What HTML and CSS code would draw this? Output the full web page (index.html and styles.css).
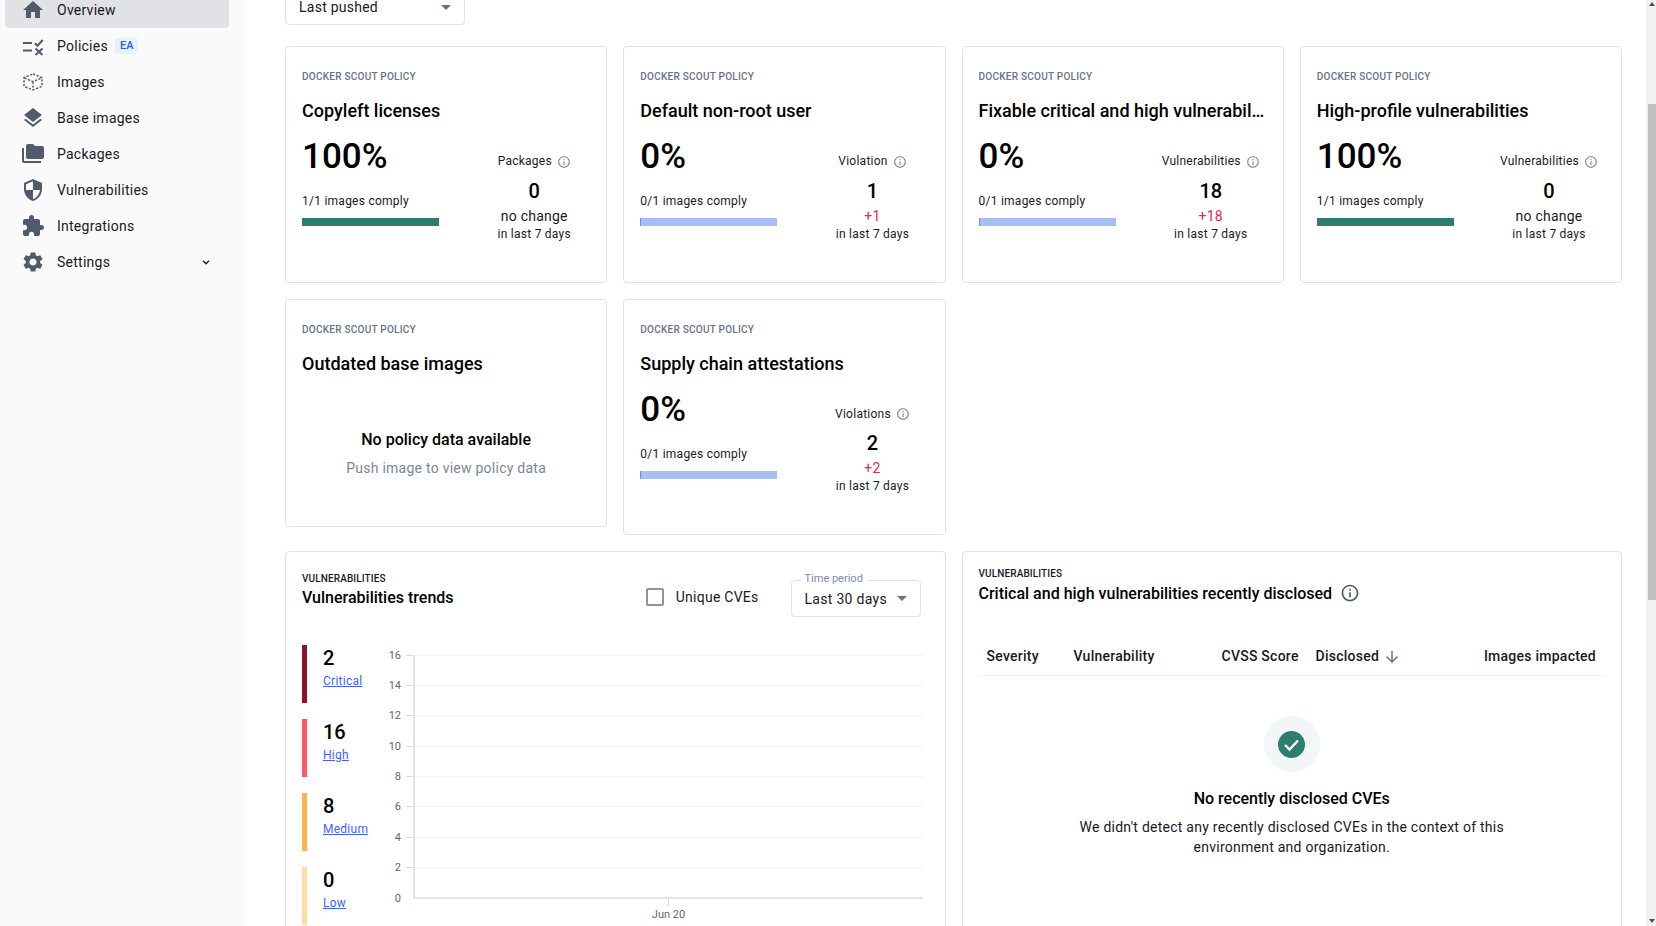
FILE: index.html
```html
<!DOCTYPE html>
<html lang="en">
<head>
    <meta charset="UTF-8">
    <meta name="viewport" content="width=device-width, initial-scale=1.0">
    <title>Docker Scout Overview</title>
    <link rel="stylesheet" href="styles.css">
</head>
<body>
    <svg class="sprites" width="0" height="0">
        <symbol id="info" viewBox="0 0 24 24"><path d="M11 7h2v2h-2zm0 4h2v6h-2zm1-9C6.48 2 2 6.48 2 12s4.48 10 10 10 10-4.48 10-10S17.52 2 12 2zm0 18c-4.41 0-8-3.59-8-8s3.59-8 8-8 8 3.59 8 8-3.59 8-8 8z"/></symbol>
    </svg>

    <aside class="sidebar">
        <nav class="nav">
            <a class="nav-item active">
                <svg class="nav-icon" viewBox="0 0 24 24"><path d="M10 20v-6h4v6h5v-8h3L12 3 2 12h3v8z"/></svg>
                <span>Overview</span>
            </a>
            <a class="nav-item">
                <svg class="nav-icon" viewBox="0 0 24 24"><path d="M2 8h9v2H2zM2 15.5h9v2H2z"/><path class="line" d="M14 9.2l2.5 2.5 5.2-5.7M14.5 14.5l7 6.5M21.5 14.5l-7 6.5"/></svg>
                <span>Policies</span>
                <span class="badge">EA</span>
            </a>
            <a class="nav-item">
                <svg class="nav-icon" viewBox="0 0 24 24"><path class="dash" d="M12 4l9 3.6v8.8L12 20l-9-3.6V7.6zM3.5 8l8.500 3.600L20.500 8M12 11.600V20"/></svg>
                <span>Images</span>
            </a>
            <a class="nav-item">
                <svg class="nav-icon" viewBox="0 0 24 24"><path d="M11.99 18.54l-7.37-5.73L3 14.07l9 7 9-7-1.63-1.27-7.38 5.74zM12 16l7.36-5.73L21 9l-9-7-9 7 1.63 1.27L12 16z"/></svg>
                <span>Base images</span>
            </a>
            <a class="nav-item">
                <svg class="nav-icon" viewBox="0 0 24 24"><path d="M3 6H1v13c0 1.1.9 2 2 2h17v-2H3V6z"/><path d="M21 4h-7l-2-2H7c-1.100 0-2 .9-2 2v11c0 1.100.9 2 2 2h14c1.100 0 2-.9 2-2V6c0-1.100-.9-2-2-2z"/></svg>
                <span>Packages</span>
            </a>
            <a class="nav-item">
                <svg class="nav-icon" viewBox="0 0 24 24"><path d="M12 1L3 5v6c0 5.550 3.840 10.740 9 12 5.160-1.260 9-6.450 9-12V5l-9-4zm0 10.990h7c-.53 4.120-3.280 7.790-7 8.940V12H5V6.300l7-3.110v8.800z"/></svg>
                <span>Vulnerabilities</span>
            </a>
            <a class="nav-item">
                <svg class="nav-icon" viewBox="0 0 24 24"><path d="M20.500 11H19V7c0-1.100-.9-2-2-2h-4V3.500C13 2.120 11.880 1 10.500 1S8 2.120 8 3.500V5H4c-1.100 0-1.990.9-1.990 2v3.800H3.500c1.490 0 2.700 1.210 2.700 2.700s-1.210 2.700-2.700 2.700H2V20c0 1.100.9 2 2 2h3.800v-1.500c0-1.490 1.210-2.700 2.700-2.700 1.490 0 2.700 1.210 2.700 2.700V22H17c1.100 0 2-.9 2-2v-4h1.500c1.380 0 2.500-1.120 2.500-2.500S21.880 11 20.500 11z"/></svg>
                <span>Integrations</span>
            </a>
            <a class="nav-item">
                <svg class="nav-icon" viewBox="0 0 24 24"><path d="M19.140 12.940c.04-.3.06-.61.06-.94 0-.32-.02-.64-.07-.94l2.030-1.580c.18-.14.23-.41.12-.61l-1.920-3.320c-.12-.22-.37-.29-.59-.22l-2.390.96c-.5-.38-1.030-.7-1.620-.94l-.36-2.540c-.04-.24-.24-.41-.48-.41h-3.840c-.24 0-.43.17-.47.41l-.36 2.540c-.59.24-1.130.57-1.620.94l-2.390-.96c-.22-.08-.47 0-.59.22L2.740 8.870c-.12.21-.08.47.12.61l2.030 1.580c-.05.3-.09.63-.09.94s.02.64.07.94l-2.030 1.580c-.18.14-.23.41-.12.61l1.920 3.320c.12.22.37.29.59.22l2.390-.96c.5.38 1.030.7 1.620.94l.36 2.54c.05.24.24.41.48.41h3.840c.24 0 .44-.17.47-.41l.36-2.540c.59-.24 1.130-.56 1.620-.94l2.390.96c.22.08.47 0 .59-.22l1.920-3.320c.12-.22.07-.47-.12-.61l-2.010-1.580zM12 15.600c-1.980 0-3.600-1.620-3.600-3.600s1.620-3.600 3.600-3.600 3.600 1.620 3.600 3.600-1.620 3.600-3.600 3.600z"/></svg>
                <span>Settings</span>
                <svg class="nav-chevron" viewBox="0 0 12 12"><path d="M2.500 4.500L6 8l3.500-3.500"/></svg>
            </a>
        </nav>
    </aside>

    <main class="main">
        <div class="sort-select">
            <span>Last pushed</span>
            <i class="caret"></i>
        </div>

        <div class="policy-grid">
            <section class="card policy">
                <div class="eyebrow">DOCKER SCOUT POLICY</div>
                <h3 class="policy-title">Copyleft licenses</h3>
                <div class="policy-body">
                    <div class="policy-left">
                        <div class="percent">100%</div>
                        <div class="comply">1/1 images comply</div>
                        <div class="bar pass"></div>
                    </div>
                    <div class="policy-right">
                        <div class="metric-label">Packages <svg class="info"><use href="#info"/></svg></div>
                        <div class="metric-value">0</div>
                        <div class="metric-change">no change</div>
                        <div class="metric-period">in last 7 days</div>
                    </div>
                </div>
            </section>

            <section class="card policy">
                <div class="eyebrow">DOCKER SCOUT POLICY</div>
                <h3 class="policy-title">Default non-root user</h3>
                <div class="policy-body">
                    <div class="policy-left">
                        <div class="percent">0%</div>
                        <div class="comply">0/1 images comply</div>
                        <div class="bar fail"></div>
                    </div>
                    <div class="policy-right">
                        <div class="metric-label">Violation <svg class="info"><use href="#info"/></svg></div>
                        <div class="metric-value">1</div>
                        <div class="metric-change up">+1</div>
                        <div class="metric-period">in last 7 days</div>
                    </div>
                </div>
            </section>

            <section class="card policy">
                <div class="eyebrow">DOCKER SCOUT POLICY</div>
                <h3 class="policy-title">Fixable critical and high vulnerabilities</h3>
                <div class="policy-body">
                    <div class="policy-left">
                        <div class="percent">0%</div>
                        <div class="comply">0/1 images comply</div>
                        <div class="bar fail"></div>
                    </div>
                    <div class="policy-right">
                        <div class="metric-label">Vulnerabilities <svg class="info"><use href="#info"/></svg></div>
                        <div class="metric-value">18</div>
                        <div class="metric-change up">+18</div>
                        <div class="metric-period">in last 7 days</div>
                    </div>
                </div>
            </section>

            <section class="card policy">
                <div class="eyebrow">DOCKER SCOUT POLICY</div>
                <h3 class="policy-title">High-profile vulnerabilities</h3>
                <div class="policy-body">
                    <div class="policy-left">
                        <div class="percent">100%</div>
                        <div class="comply">1/1 images comply</div>
                        <div class="bar pass"></div>
                    </div>
                    <div class="policy-right">
                        <div class="metric-label">Vulnerabilities <svg class="info"><use href="#info"/></svg></div>
                        <div class="metric-value">0</div>
                        <div class="metric-change">no change</div>
                        <div class="metric-period">in last 7 days</div>
                    </div>
                </div>
            </section>

            <section class="card policy short">
                <div class="eyebrow">DOCKER SCOUT POLICY</div>
                <h3 class="policy-title">Outdated base images</h3>
                <div class="no-data">
                    <div class="no-data-title">No policy data available</div>
                    <div class="no-data-text">Push image to view policy data</div>
                </div>
            </section>

            <section class="card policy">
                <div class="eyebrow">DOCKER SCOUT POLICY</div>
                <h3 class="policy-title">Supply chain attestations</h3>
                <div class="policy-body">
                    <div class="policy-left">
                        <div class="percent">0%</div>
                        <div class="comply">0/1 images comply</div>
                        <div class="bar fail"></div>
                    </div>
                    <div class="policy-right">
                        <div class="metric-label">Violations <svg class="info"><use href="#info"/></svg></div>
                        <div class="metric-value">2</div>
                        <div class="metric-change up">+2</div>
                        <div class="metric-period">in last 7 days</div>
                    </div>
                </div>
            </section>
        </div>

        <div class="vuln-grid">
            <section class="card trends">
                <div class="trends-head">
                    <div>
                        <div class="eyebrow dark">VULNERABILITIES</div>
                        <h3 class="section-title">Vulnerabilities trends</h3>
                    </div>
                    <label class="check">
                        <span class="check-box"></span>
                        <span>Unique CVEs</span>
                    </label>
                    <div class="period-select">
                        <span class="period-label">Time period</span>
                        <span>Last 30 days</span>
                        <i class="caret"></i>
                    </div>
                </div>
                <div class="trends-body">
                    <div class="legend">
                        <div class="legend-item critical"><b>2</b><a>Critical</a></div>
                        <div class="legend-item high"><b>16</b><a>High</a></div>
                        <div class="legend-item medium"><b>8</b><a>Medium</a></div>
                        <div class="legend-item low"><b>0</b><a>Low</a></div>
                    </div>
                    <svg class="chart" viewBox="0 0 560 281" width="560" height="281">
                        <g class="grid-lines">
                            <path d="M36 10.500H545M36 40.500H545M36 70.500H545M36 101.500H545M36 131.500H545M36 161.500H545M36 192.500H545M36 222.500H545"/>
                        </g>
                        <g class="ticks">
                            <path d="M28 10.500h8M28 40.500h8M28 70.500h8M28 101.500h8M28 131.500h8M28 161.500h8M28 192.500h8M28 222.500h8M290.500 253v8"/>
                        </g>
                        <path class="axis" d="M36 10V253H545"/>
                        <g class="y-labels">
                            <text x="23" y="13.500">16</text>
                            <text x="23" y="43.500">14</text>
                            <text x="23" y="73.500">12</text>
                            <text x="23" y="104.500">10</text>
                            <text x="23" y="134.500">8</text>
                            <text x="23" y="165">6</text>
                            <text x="23" y="195.500">4</text>
                            <text x="23" y="225.500">2</text>
                            <text x="23" y="257">0</text>
                        </g>
                        <text class="x-label" x="290.500" y="273">Jun 20</text>
                    </svg>
                </div>
            </section>

            <section class="card disclosed">
                <div class="eyebrow dark">VULNERABILITIES</div>
                <h3 class="section-title with-info">Critical and high vulnerabilities recently disclosed <svg class="info big"><use href="#info"/></svg></h3>
                <div class="table-head">
                    <span>Severity</span>
                    <span>Vulnerability</span>
                    <span>CVSS Score</span>
                    <span class="sorted">Disclosed
                        <svg viewBox="0 0 24 24" class="sort-arrow"><path d="M20 12l-1.410-1.410L13 16.170V4h-2v12.170l-5.580-5.590L4 12l8 8 8-8z"/></svg>
                    </span>
                    <span class="right">Images impacted</span>
                </div>
                <div class="empty">
                    <div class="empty-circle">
                        <svg viewBox="0 0 27 27" width="27" height="27"><circle cx="13.500" cy="13.500" r="13.500" fill="#2e7d6e"/><path d="M7 14l4.500 4.500 8.500-9" fill="none" stroke="#fff" stroke-width="2.400"/></svg>
                    </div>
                    <div class="empty-title">No recently disclosed CVEs</div>
                    <p class="empty-text">We didn't detect any recently disclosed CVEs in the context of this environment and organization.</p>
                </div>
            </section>
        </div>
    </main>

    <div class="scrollbar">
        <i class="arrow-up"></i>
        <div class="thumb"></div>
        <i class="arrow-down"></i>
    </div>
</body>
</html>
```

FILE: styles.css
```css
* {
    box-sizing: border-box;
}
body {
    font-family: Roboto, sans-serif;
    letter-spacing: 0.25px;
    display: flex;
    height: 100vh;
    margin: 0;
    overflow: hidden;
    background: #fff;
    color: #17191e;
}
.sprites {
    display: none;
}

/* sidebar */
.sidebar {
    width: 245px;
    flex-shrink: 0;
    background: #fafafa;
    padding: 0 16px 0 5px;
}
.nav {
    margin-top: -8px;
}
.nav-item {
    display: flex;
    align-items: center;
    height: 36px;
    padding: 0 16px;
    font-size: 14px;
    color: #17191e;
    border-radius: 4px;
}
.nav-item.active {
    background: #e1e2e6;
}
.nav-icon {
    width: 24px;
    height: 24px;
    margin-right: 12px;
    fill: #505a6a;
    flex-shrink: 0;
}
.nav-icon .line {
    fill: none;
    stroke: #505a6a;
    stroke-width: 2;
}
.nav-icon .dash {
    fill: none;
    stroke: #505a6a;
    stroke-width: 1.500;
    stroke-dasharray: 2.200 1.600;
}
.badge {
    margin-left: 7px;
    padding: 0 5px;
    height: 16px;
    line-height: 16px;
    font-size: 11px;
    font-weight: 500;
    letter-spacing: 0;
    color: #2560e0;
    background: #e5f2fc;
    border-radius: 3px;
}
.nav-chevron {
    width: 10px;
    height: 10px;
    margin-left: auto;
    margin-right: 2px;
    fill: none;
    stroke: #17191e;
    stroke-width: 1.800;
}

/* main column */
.main {
    flex: 1;
    min-width: 0;
    padding: 0 24px 0 40px;
}
.sort-select {
    display: flex;
    align-items: center;
    justify-content: space-between;
    width: 180px;
    height: 40px;
    margin-top: -15px;
    padding: 4px 13px 0 13px;
    font-size: 14px;
    border: 1px solid #e1e2e6;
    border-radius: 4px;
}
.caret {
    width: 0;
    height: 0;
    border-left: 5px solid transparent;
    border-right: 5px solid transparent;
    border-top: 5px solid #677285;
}
.policy-grid {
    display: grid;
    grid-template-columns: repeat(4, minmax(0, 1fr));
    gap: 16px;
    align-items: start;
    margin-top: 21px;
}
.card {
    background: #fff;
    border: 1px solid #e1e2e6;
    border-radius: 4px;
}
.policy {
    height: 236.500px;
    padding: 22px 16px 0;
}
.policy.short {
    height: 228px;
}
.eyebrow {
    font-size: 10px;
    line-height: 16px;
    font-weight: 500;
    color: #677285;
}
.eyebrow.dark {
    color: #17191e;
    letter-spacing: 0.12px;
}
.policy-title {
    margin: 13px 0 0;
    font-size: 18px;
    line-height: 26px;
    font-weight: 500;
    letter-spacing: 0;
    color: #000;
    white-space: nowrap;
    overflow: hidden;
    text-overflow: ellipsis;
}
.policy-body {
    display: flex;
    justify-content: space-between;
}
.policy-left {
    width: 137px;
    padding-top: 12px;
}
.percent {
    font-size: 35px;
    line-height: 42px;
    font-weight: 500;
    letter-spacing: 0;
    color: #000;
}
.comply {
    margin-top: 14px;
    font-size: 12px;
    line-height: 18px;
}
.bar {
    height: 8px;
    margin-top: 8px;
}
.bar.pass {
    background: #2e7d6e;
}
.bar.fail {
    background: #a8bef5;
    border-left: 1px solid #6f8fef;
}
.policy-right {
    width: 112px;
    padding-top: 28px;
    text-align: center;
}
.metric-label {
    display: flex;
    align-items: center;
    justify-content: center;
    gap: 5px;
    font-size: 12px;
    line-height: 18px;
    white-space: nowrap;
}
.info {
    width: 14px;
    height: 14px;
    margin-top: 1px;
    fill: #7d8694;
    flex-shrink: 0;
}
.info.big {
    width: 20px;
    height: 20px;
    margin-top: 0;
    margin-left: 4px;
    fill: #505a6a;
    vertical-align: -4px;
}
.metric-value {
    margin-top: 7.600px;
    font-size: 20px;
    line-height: 26px;
    font-weight: 500;
    letter-spacing: 0;
    color: #000;
}
.metric-change {
    font-size: 14px;
    line-height: 20px;
    margin-top: 2px;
}
.metric-change.up {
    color: #e2264d;
}
.metric-period {
    font-size: 12px;
    line-height: 16px;
}
.no-data {
    margin-top: 51px;
    text-align: center;
}
.no-data-title {
    font-size: 16px;
    line-height: 24px;
    font-weight: 500;
    letter-spacing: 0;
    color: #000;
}
.no-data-text {
    margin-top: 4px;
    font-size: 14px;
    line-height: 24px;
    color: #7a8599;
}

/* bottom row */
.vuln-grid {
    display: grid;
    grid-template-columns: repeat(2, minmax(0, 1fr));
    gap: 16px;
    margin-top: 16px;
}
.trends,
.disclosed {
    height: 500px;
}
.trends {
    padding: 19px 16px 0;
}
.section-title {
    margin: 0;
    font-size: 16px;
    line-height: 24px;
    font-weight: 500;
    letter-spacing: 0;
    color: #000;
}
.trends .section-title {
    margin-top: -1px;
}
.trends-head {
    display: flex;
    align-items: flex-start;
}
.trends-head > div:first-child {
    flex: 1;
}
.check {
    display: flex;
    align-items: center;
    gap: 12px;
    margin-top: 16px;
    font-size: 14px;
    line-height: 20px;
}
.check-box {
    width: 18px;
    height: 18px;
    border: 2px solid #8993a4;
    border-radius: 2px;
}
.period-select {
    position: relative;
    display: flex;
    align-items: center;
    justify-content: space-between;
    width: 130px;
    height: 37px;
    margin: 9px 8px 0 32px;
    padding: 1px 13px;
    font-size: 14px;
    letter-spacing: 0.3px;
    border: 1px solid #e1e2e6;
    border-radius: 4px;
}
.period-label {
    position: absolute;
    top: -9px;
    left: 9px;
    padding: 0 4px;
    font-size: 11px;
    line-height: 14px;
    letter-spacing: 0;
    color: #7d8ba8;
    background: #fff;
}
.trends-body {
    display: flex;
    margin-top: 28px;
}
.legend {
    width: 76px;
    flex-shrink: 0;
}
.legend-item {
    height: 58px;
    margin-bottom: 16px;
    padding: 1px 0 0 16px;
    border-left: 5px solid;
}
.legend-item.critical {
    border-color: #8b1528;
}
.legend-item.high {
    border-color: #ff5a64;
}
.legend-item.medium {
    border-color: #ffb24d;
}
.legend-item.low {
    border-color: #fddfa0;
}
.legend-item b {
    display: block;
    font-size: 20px;
    line-height: 24px;
    font-weight: 500;
    letter-spacing: 0;
    color: #000;
}
.legend-item a {
    display: block;
    margin-top: 1px;
    font-size: 12px;
    line-height: 20px;
    color: #3f5fff;
    text-decoration: underline;
}
.chart {
    display: block;
    flex-shrink: 0;
    letter-spacing: 0;
}
.grid-lines path {
    stroke: #f3f3f3;
    fill: none;
}
.ticks path {
    stroke: #dcdcdc;
    fill: none;
}
.axis {
    stroke: #dcdcdc;
    stroke-width: 1.500;
    fill: none;
}
.y-labels text {
    font-size: 11px;
    fill: #666;
    text-anchor: end;
}
.x-label {
    font-size: 11px;
    fill: #666;
    text-anchor: middle;
}
.disclosed {
    padding: 14px 16px 0;
}
.with-info {
    margin-top: 0;
}
.table-head {
    display: grid;
    grid-template-columns: 87px 148px 94px 1fr 130px;
    align-items: center;
    height: 40px;
    margin-top: 30px;
    padding: 0 9px 0 8px;
    font-size: 14px;
    font-weight: 500;
    color: #17191e;
    border-bottom: 1px solid #eeeff1;
    white-space: nowrap;
}
.right {
    text-align: right;
}
.sorted {
    display: flex;
    align-items: center;
    gap: 4px;
}
.sort-arrow {
    width: 18px;
    height: 18px;
    fill: #677285;
    margin-top: 2px;
}
.empty {
    display: flex;
    flex-direction: column;
    align-items: center;
    padding-top: 40px;
    text-align: center;
}
.empty-circle {
    display: flex;
    align-items: center;
    justify-content: center;
    width: 56px;
    height: 56px;
    background: #f2f6f7;
    border-radius: 50%;
}
.empty-title {
    margin-top: 15px;
    font-size: 16px;
    line-height: 24px;
    font-weight: 500;
    letter-spacing: 0;
    color: #000;
}
.empty-text {
    width: 440px;
    margin: 6px 0 0;
    font-size: 14px;
    line-height: 20px;
}

/* page scrollbar */
.scrollbar {
    display: flex;
    flex-direction: column;
    align-items: flex-end;
    width: 10px;
    flex-shrink: 0;
    background: #f1f1f1;
}
.thumb {
    width: 8px;
    height: 496px;
    margin-top: 98px;
    background: #c1c1c1;
}
.arrow-up,
.arrow-down {
    width: 0;
    height: 0;
    margin: 2px 1px 0 0;
    border-left: 3.500px solid transparent;
    border-right: 3.500px solid transparent;
}
.arrow-up {
    border-bottom: 4px solid #505050;
}
.arrow-down {
    margin-top: auto;
    margin-bottom: 3px;
    border-top: 4px solid #505050;
}
```
